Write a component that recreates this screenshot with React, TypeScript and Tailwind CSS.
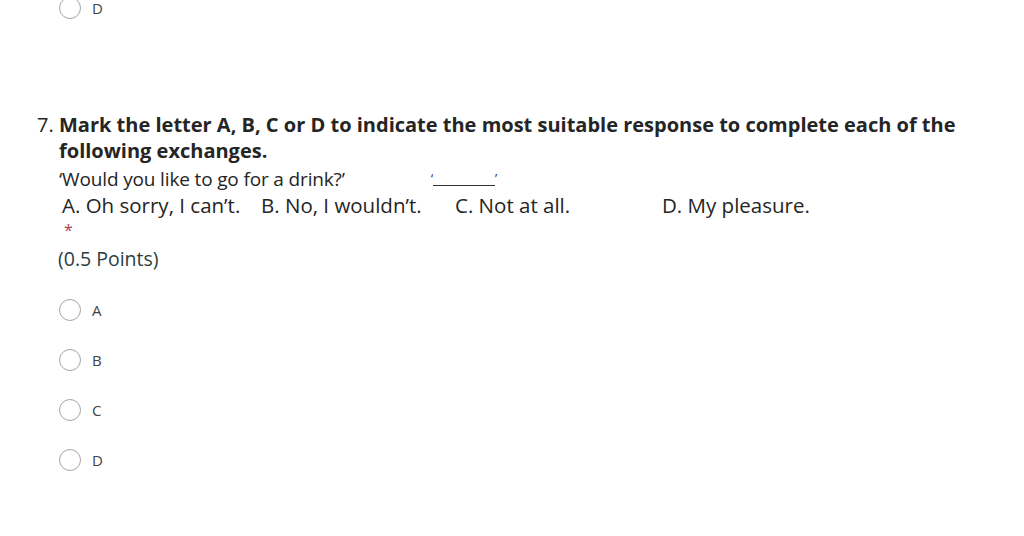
import React from 'react';

const font = { fontFamily: '"Open Sans", "Noto Sans", sans-serif' };

const choices = ['A', 'B', 'C', 'D'];

const Radio = ({ label }: { label: string }) => (
  <div className="flex items-center h-[50px]">
    <span className="w-[22px] h-[22px] rounded-full border-[1.5px] border-[#a5a5a5] bg-white" />
    <span className="ml-[11px] text-[15px] text-[#444]">{label}</span>
  </div>
);

export default function App() {
  return (
    <div className="w-[1024px] h-[536px] bg-white overflow-hidden" style={font}>
      {/* tail of the previous question */}
      <div className="pl-[59px] -mt-[17px]">
        <Radio label="D" />
      </div>

      <div className="mt-[79px] pl-[37px] flex text-[#252525]">
        <span className="w-[22px] text-[20px] leading-[26px]">7.</span>
        <div className="flex flex-col">
          <div className="text-[20px] font-bold leading-[26px] w-[920px]">
            Mark the letter A, B, C or D to indicate the most suitable response to complete each of the
            following exchanges.
          </div>
          <div className="flex text-[19px] leading-[26px] tracking-[-0.15px] mt-[2px]">
            <span className="w-[372px]">‘Would you like to go for a drink?’</span>
            <span>
              <span className="text-[12px] align-top">‘</span>
              <span className="inline-block w-[62px] border-b border-[#333] h-[20px]" />
              <span className="text-[12px] align-top">’</span>
            </span>
          </div>
          <div className="flex text-[20.5px] leading-[26px] pl-[3px]">
            <span className="w-[199px]">A. Oh sorry, I can’t.</span>
            <span className="w-[194px]">B. No, I wouldn’t.</span>
            <span className="w-[207px]">C. Not at all.</span>
            <span>D. My pleasure.</span>
          </div>
          <div className="pl-[5px] text-[#b0414f] text-[16px] leading-[24px]">*</div>
          <div className="mt-[4px] -ml-[1px] text-[19.5px] text-[#2b3d3f] leading-[26px]">(0.5 Points)</div>
        </div>
      </div>

      <div className="mt-[13px] pl-[59px] flex flex-col">
        {choices.map((c) => (
          <Radio key={c} label={c} />
        ))}
      </div>
    </div>
  );
}
